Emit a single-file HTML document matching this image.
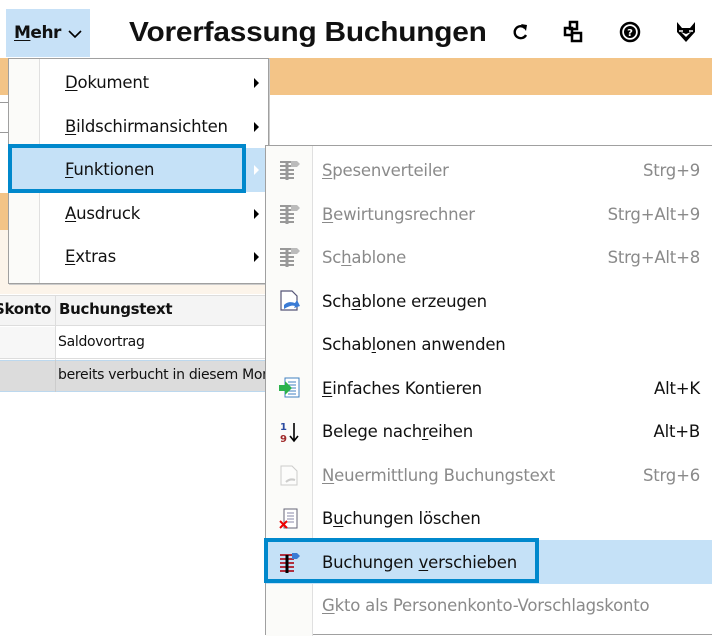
<!DOCTYPE html>
<html><head><meta charset="utf-8"><style>
*{margin:0;padding:0;box-sizing:border-box}
body{width:712px;height:630px;overflow:hidden;background:#fff;position:relative;font-family:"DejaVu Sans","Liberation Sans",sans-serif;color:#111}
.a{position:absolute}
u{text-decoration:underline;text-underline-offset:2px}
.it{position:absolute;font-size:16.5px;letter-spacing:-0.2px;line-height:20px;white-space:nowrap}
.dis{color:#8a8a8a}
.sc{position:absolute;right:12px;font-size:16.5px;letter-spacing:-0.2px}
.arr{position:absolute;width:0;height:0;border-top:5px solid transparent;border-bottom:5px solid transparent;border-left:5px solid #000}
</style></head><body>
<div class="a" style="left:6px;top:9px;width:84px;height:48px;background:#c7e1f7"></div>
<div class="a" style="left:14px;top:23px;font-size:17px;font-weight:bold;letter-spacing:-0.5px"><u>M</u>ehr</div>
<svg class="a" style="left:67px;top:28px" width="16" height="12"><path d="M2 3l6 6 6-6" stroke="#000" stroke-width="1.6" fill="none"/></svg>
<div class="a" style="left:129px;top:16px;font-size:28px;font-weight:bold;letter-spacing:-0.2px;font-family:'Liberation Sans',sans-serif;transform:scaleX(1.065);transform-origin:left">Vorerfassung Buchungen</div>
<svg class="a" style="left:510px;top:22px" width="20" height="20"><path d="M15 6A6 6 0 1 0 16 13" stroke="#000" stroke-width="2.4" fill="none"/><path d="M11 2l6 1-1 6z" fill="#000"/></svg>
<svg class="a" style="left:563px;top:20px" width="22" height="24"><rect x="7" y="2" width="7" height="7" fill="none" stroke="#000" stroke-width="2.5"/><rect x="2" y="8" width="7" height="7" fill="none" stroke="#000" stroke-width="2.5"/><rect x="9" y="13" width="9" height="8" fill="none" stroke="#000" stroke-width="2.5"/></svg>
<svg class="a" style="left:619px;top:21px" width="22" height="22"><circle cx="11" cy="11" r="9" fill="none" stroke="#000" stroke-width="2.5"/><circle cx="11" cy="11" r="6" fill="#000"/><text x="11" y="15" font-size="10" fill="#fff" text-anchor="middle" font-weight="bold">?</text></svg>
<svg class="a" style="left:674px;top:20px" width="24" height="24"><path d="M3 2 L8 8 L16 8 L21 2 L21 12 L12 22 L3 12 Z" fill="#000"/><path d="M7 12 L12 17 L17 12 L12 14 Z" fill="#fff"/><path d="M5 11h4M15 11h4" stroke="#fff" stroke-width="1.5"/></svg>
<div class="a" style="left:0;top:58px;width:712px;height:37px;background:#f3c487"></div>
<div class="a" style="left:0;top:102px;width:10px;height:1px;background:#999"></div>
<div class="a" style="left:0;top:132px;width:10px;height:1px;background:#999"></div>
<div class="a" style="left:0;top:193px;width:265px;height:37px;background:#f3c487"></div>
<div class="a" style="left:0;top:230px;width:265px;height:64px;background:#fcf4ea"></div>
<div class="a" style="left:0;top:295px;width:265px;height:31px;background:#f4f4f4;border-top:1px solid #ddd;border-bottom:1px solid #ddd"></div>
<div class="a" style="top:300px;font-size:15px;font-weight:bold;left:-6px;letter-spacing:-0.3px">Skonto</div>
<div class="a" style="left:55px;top:295px;width:1px;height:97px;background:#ddd"></div>
<div class="a" style="left:59px;top:300px;font-size:15px;font-weight:bold;letter-spacing:-0.3px">Buchungstext</div>
<div class="a" style="left:56px;top:327px;width:209px;height:32px;background:#fff;border-bottom:1px solid #ddd"></div>
<div class="a" style="left:0;top:327px;width:55px;height:32px;background:#f7f7f7;border-bottom:1px solid #ddd"></div>
<div class="a" style="left:58px;top:334px;font-size:14px;letter-spacing:-0.3px">Saldovortrag</div>
<div class="a" style="left:0;top:360px;width:265px;height:32px;background:#dcdcdc;border-top:1px solid #bcd8ee;border-bottom:1px solid #bcd8ee"></div>
<div class="a" style="left:55px;top:360px;width:1px;height:32px;background:#ccc"></div>
<div class="a" style="left:58px;top:367px;font-size:14px;letter-spacing:-0.3px;white-space:nowrap;width:207px;overflow:hidden">bereits verbucht in diesem Monat</div>

<div class="a" style="left:8px;top:58px;width:261px;height:226px;background:#fff;border:1px solid #a0a0a0;box-shadow:1px 1px 0 #ccc"></div>
<div class="a" style="left:9px;top:59px;width:31px;height:224px;background:#fbfbf9;border-right:1px solid #e0e0e0"></div>
<div class="a" style="left:10px;top:148px;width:255px;height:44px;background:#c5e1f7"></div>
<div class="it" style="left:65px;top:73px"><u>D</u>okument</div>
<div class="it" style="left:65px;top:117px"><u>B</u>ildschirmansichten</div>
<div class="it" style="left:65px;top:160px"><u>F</u>unktionen</div>
<div class="it" style="left:65px;top:204px"><u>A</u>usdruck</div>
<div class="it" style="left:65px;top:247px"><u>E</u>xtras</div>
<div class="arr" style="left:254px;top:78px"></div>
<div class="arr" style="left:254px;top:122px"></div>
<div class="arr" style="left:254px;top:165px;border-left-color:#fff"></div>
<div class="arr" style="left:254px;top:209px"></div>
<div class="arr" style="left:254px;top:252px"></div>
<div class="a" style="left:8px;top:144px;width:238px;height:49px;border:4px solid #0088cc"></div>

<div class="a" style="left:265px;top:145px;width:460px;height:490px;background:#fff;border:1px solid #a0a0a0"></div>
<div class="a" style="left:266px;top:146px;width:47px;height:490px;background:#fbfbf9;border-right:1px solid #e0e0e0"></div>
<div class="a" style="left:266px;top:540px;width:446px;height:44px;background:#c5e1f7"></div>
<div class="a" style="left:264px;top:538px;width:275px;height:45px;border:4px solid #0088cc"></div>

<svg class="a" style="left:278px;top:158px" width="24" height="420">
 <g stroke="#999" stroke-width="2"><path d="M2 4h14M2 8h14M2 12h14M2 16h14M2 20h14"/><path d="M9 4v18" stroke-width="3"/><path d="M13 3h6l3 3-3 3h-6z" fill="#bbb" stroke="none"/></g>
 <g stroke="#999" stroke-width="2" transform="translate(0,44)"><path d="M2 4h14M2 8h14M2 12h14M2 16h14M2 20h14"/><path d="M9 4v18" stroke-width="3"/><path d="M13 3h6l3 3-3 3h-6z" fill="#bbb" stroke="none"/></g>
 <g stroke="#999" stroke-width="2" transform="translate(0,87)"><path d="M2 4h14M2 8h14M2 12h14M2 16h14M2 20h14"/><path d="M9 4v18" stroke-width="3"/><path d="M13 3h6l3 3-3 3h-6z" fill="#bbb" stroke="none"/></g>
 <g transform="translate(0,131)"><path d="M3 2h11l5 5v14H3z" fill="#fff" stroke="#557" stroke-width="1.2"/><path d="M6 16c4-4 8-3 11-2l2-3 3 6-6 2 1-2c-3-1-6 0-11 3z" fill="#3a7bd5"/></g>
 <g transform="translate(0,218)"><rect x="7" y="2" width="14" height="19" fill="#fff" stroke="#4080c0"/><path d="M10 6h8M10 9h8M10 12h8M10 15h8M10 18h8" stroke="#4080c0"/><path d="M1 9h6v-4l7 7-7 7v-4H1z" fill="#2bb24c"/></g>
 <g transform="translate(0,262)"><text x="2" y="10" font-size="10" font-weight="bold" fill="#2a4aa0">1</text><text x="2" y="22" font-size="10" font-weight="bold" fill="#a02a2a">9</text><path d="M16 3v17M12 16l4 5 4-5" stroke="#000" stroke-width="1.6" fill="none"/></g>
 <g transform="translate(0,306)" opacity="0.35"><path d="M3 2h11l5 5v14H3z" fill="#fff" stroke="#777"/><path d="M8 18c3-3 6-3 9-2" stroke="#777" stroke-width="2" fill="none"/></g>
 <g transform="translate(0,349)"><rect x="6" y="2" width="13" height="19" fill="#fff" stroke="#667"/><path d="M9 6h7M9 9h7M9 12h7M9 15h7" stroke="#88a"/><path d="M2 14l7 7M9 14l-7 7" stroke="#e00" stroke-width="2"/></g>
 <g stroke-width="2" transform="translate(0,393)"><path d="M2 4h14M2 8h14M2 12h14M2 16h14M2 20h14" stroke="#b03040"/><path d="M9 4v18" stroke="#000" stroke-width="3"/><path d="M14 2h5l3 3-3 3h-5z" fill="#3a7bd5" stroke="none"/></g>
 <g transform="translate(0,437)" fill="#aaa"><rect x="2" y="6" width="8" height="14" rx="2"/><rect x="13" y="6" width="8" height="14" rx="2"/><rect x="8" y="8" width="7" height="5"/></g>
</svg>

<div class="it dis" style="left:322px;top:161px"><u>S</u>pesenverteiler</div><div class="sc dis" style="top:161px">Strg+9</div>
<div class="it dis" style="left:322px;top:205px"><u>B</u>ewirtungsrechner</div><div class="sc dis" style="top:205px">Strg+Alt+9</div>
<div class="it dis" style="left:322px;top:248px">Sc<u>h</u>ablone</div><div class="sc dis" style="top:248px">Strg+Alt+8</div>
<div class="it" style="left:322px;top:292px">Sch<u>a</u>blone erzeugen</div>
<div class="it" style="left:322px;top:335px">Schab<u>l</u>onen anwenden</div>
<div class="it" style="left:322px;top:379px"><u>E</u>infaches Kontieren</div><div class="sc" style="top:379px">Alt+K</div>
<div class="it" style="left:322px;top:422px">Belege nach<u>r</u>eihen</div><div class="sc" style="top:422px">Alt+B</div>
<div class="it dis" style="left:322px;top:466px"><u>N</u>euermittlung Buchungstext</div><div class="sc dis" style="top:466px">Strg+6</div>
<div class="it" style="left:322px;top:509px">B<u>u</u>chungen löschen</div>
<div class="it" style="left:322px;top:553px">Buchungen <u>v</u>erschieben</div>
<div class="it dis" style="left:322px;top:596px"><u>G</u>kto als Personenkonto-Vorschlagskonto</div>
</body></html>
